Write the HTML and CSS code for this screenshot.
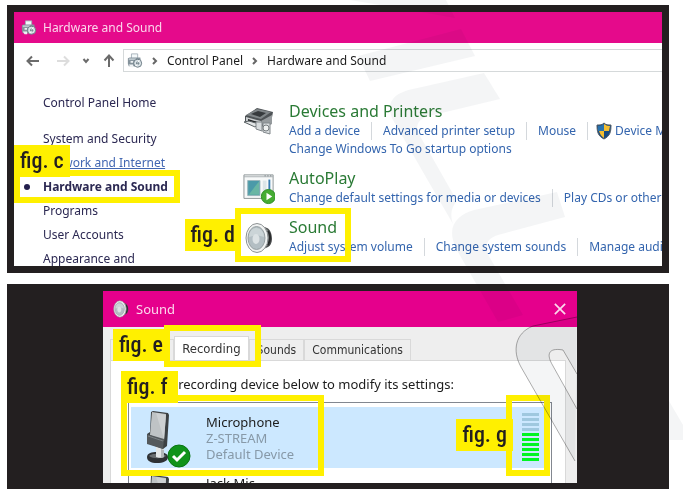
FILE: index.html
```html
<!DOCTYPE html>
<html lang="en">
<head>
<meta charset="utf-8">
<title>Sound settings guide</title>
<link rel="stylesheet" href="styles.css">
</head>
<body>
<svg width="0" height="0" class="defs" aria-hidden="true">
  <symbol id="hardware" viewBox="0 0 18 18">
    <path d="M5 1h7v6H5z" fill="#f4f8fa" stroke="#a2afb8"/>
    <path d="M1 6l2-1h12l1 8-5 2H2l-1-3z" fill="#84929b"/>
    <path d="M2 6h8v2H2z" fill="#bdc8ce"/>
    <path d="M4 9h3v2H4zM2 13h5v3H4z" fill="#eef2f4"/>
    <circle cx="12" cy="11.500" r="4.500" fill="#d9e2e6" stroke="#63737d"/>
    <circle cx="12" cy="11.500" r="1.800" fill="#72838d"/>
    <path d="M12 11l2-3M12 12l-2 3" stroke="#fff"/>
  </symbol>
  <symbol id="speaker" viewBox="0 0 28 32">
    <path d="M12 2l10 4c3 1 5 6 5 11 0 4-2 7-4 8l-11 5z" fill="#4b4d4f"/>
    <path d="M17 4l5 3c4 4 4 13 0 17l-6 4z" fill="#77797a"/>
    <path d="M23 9c3 4 2 10 0 14" fill="none" stroke="#292b2c" stroke-width="2"/>
    <ellipse cx="12" cy="16" rx="11" ry="14.500" fill="#f1f3f3" stroke="#8d9294"/>
    <ellipse cx="11.500" cy="16" rx="8.500" ry="11.500" fill="#b3bec3" stroke="#969fa2"/>
    <path d="M4 15c0-5 3-9 7-9 5 0 8 4 8 9l-7-2z" fill="#cbd4d7"/>
    <ellipse cx="11" cy="17" rx="3.500" ry="5" fill="#dce2e4"/>
  </symbol>
  <symbol id="microphone" viewBox="0 0 24 52">
    <path d="M0 46c0-4 5-5 10-5s11 1 11 5-5 6-11 6-10-2-10-6z" fill="#2f3235"/>
    <path d="M2 45c2-3 15-3 17 0-4 3-13 3-17 0z" fill="#6a6e71"/>
    <path d="M9 33l8 1v12c-2 1-6 1-8 0z" fill="#e3e6e7"/>
    <path d="M14 38l3 1v7l-3 1z" fill="#b2b7b9"/>
    <path d="M4 1l2-1 15 2 1 2-2 31-4 3-16-6V23l3-2z" fill="#3c4043"/>
    <path d="M5 1l14 2-2 27-14-6z" fill="#bfc3c5"/>
    <path d="M9 2l10 2-2 24z" fill="#cdd0d2"/>
    <path d="M0 23l17 5-1 10-16-5z" fill="#54595c"/>
    <path d="M1 25l15 5" stroke="#7b8184"/>
  </symbol>
</svg>

<main class="page">
  <section class="frame">
    <div class="window">
      <header class="titlebar"><svg class="icon-sm"><use href="#hardware"/></svg><h1>Hardware and Sound</h1></header>
      <div class="toolbar">
        <button class="nav" aria-label="Back"><svg viewBox="0 0 14 14"><path d="M13 7H2M6 2.500L1.500 7 6 11.500"/></svg></button>
        <button class="nav forward" aria-label="Forward" disabled><svg viewBox="0 0 14 14"><path d="M1 7h11M8 2.500L12.500 7 8 11.500"/></svg></button>
        <button class="nav recent" aria-label="Recent locations"><svg viewBox="0 0 8 14"><path d="M1.500 5L4 8l2.500-3"/></svg></button>
        <button class="nav" aria-label="Up"><svg viewBox="0 0 14 14"><path d="M7 13V2M2.500 6.500L7 1.500l4.500 5"/></svg></button>
        <nav class="address" aria-label="Address">
          <svg class="icon-sm"><use href="#hardware"/></svg>
          <svg class="chevron" viewBox="0 0 6 10"><path d="M1 2l3 3-3 3"/></svg>
          <a href="#">Control Panel</a>
          <svg class="chevron" viewBox="0 0 6 10"><path d="M1 2l3 3-3 3"/></svg>
          <a href="#">Hardware and Sound</a>
        </nav>
      </div>
      <div class="content">
        <nav class="sidebar" aria-label="Categories">
          <a class="home" href="#">Control Panel Home</a>
          <a href="#">System and Security</a>
          <a class="hover" href="#">Network and Internet</a>
          <a class="current" href="#">Hardware and Sound<span class="mark mark-c"></span><span class="tag tag-c">fig. c</span></a>
          <a href="#">Programs</a>
          <a href="#">User Accounts</a>
          <a class="cut" href="#">Appearance and</a>
        </nav>
        <div class="categories">
          <section class="category">
            <svg class="icon" viewBox="0 0 32 32">
              <path d="M2 10L14 2l16 4-2 11-12 5L2 16z" fill="#4e5356"/>
              <path d="M3 9L14 3l14 3-10 7z" fill="#808689"/><path d="M8 8l7-3 8 2-6 4z" fill="#363a3d"/>
              <path d="M3 11l15 4v5L3 16z" fill="#c9cdcf"/><path d="M5 13l10 3v3L5 16z" fill="#222527"/>
              <path d="M1 16l5-1 10 3-4 3z" fill="#e2e5e6" stroke="#5c6366"/><path d="M18 15l11-6v9l-8 4z" fill="#969b9e"/>
              <path d="M13 16h6v9l-6-2zM20 17h7v11l-7-2z" fill="#d8dcde" stroke="#80868a"/><circle cx="23" cy="22" r="3" fill="#eef0f0" stroke="#777d80"/>
            </svg>
            <div class="info"><h2>Devices and Printers</h2>
              <p class="links"><a href="#">Add a device</a><a href="#">Advanced printer setup</a><a href="#">Mouse</a><a class="admin" href="#"><svg class="shield" viewBox="0 0 16 18"><path d="M8 1c2 2 4 2 7 2 0 7-1 11-7 14C2 14 1 10 1 3c3 0 5 0 7-2z" fill="#174b83"/><path d="M8 2v7H2V4c3 0 4-1 6-2z" fill="#2872ae"/><path d="M8 2c2 1 3 2 6 2l-1 5H8zM3 9h5v7c-3-2-4-4-5-7z" fill="#f4bd2f"/><path d="M8 1c2 2 4 2 7 2 0 7-1 11-7 14C2 14 1 10 1 3c3 0 5 0 7-2z" fill="none" stroke="#525c65"/></svg>Device Manager</a></p>
              <p class="links"><a href="#">Change Windows To Go startup options</a></p></div>
          </section>
          <section class="category">
            <svg class="icon" viewBox="0 0 34 32">
              <path d="M1 1h31v25H1z" fill="#f7f9f9" stroke="#8b9395"/><path d="M1 3h31" stroke="#a6aeb1"/><path d="M23 2h1M26 2h1M29 2h1" stroke="#566267"/>
              <path d="M5 7h13v16H5z" fill="#4b9aa9" stroke="#9bb5bb"/><path d="M6 22L17 8v14z" fill="#69b6a4"/><path d="M21 7h4v13h-4z" fill="#dce5e8"/><path d="M28 6v11" stroke="#397cb2" stroke-width="2"/>
              <circle cx="27" cy="24" r="7.500" fill="#46ac33" stroke="#2c8b25"/><path d="M25 20l6 4-6 4z" fill="#fff"/>
            </svg>
            <div class="info"><h2>AutoPlay</h2>
              <p class="links"><a href="#">Change default settings for media or devices</a><a href="#">Play CDs or other media automatically</a></p></div>
          </section>
          <section class="category">
            <svg class="icon"><use href="#speaker"/></svg>
            <div class="info"><h2>Sound</h2>
              <p class="links"><a href="#">Adjust system volume</a><a href="#">Change system sounds</a><a href="#">Manage audio devices</a></p></div>
            <span class="tag tag-d">fig. d</span><span class="mark mark-d"></span>
          </section>
        </div>
      </div>
    </div>
  </section>

  <section class="frame dialog-frame">
    <div class="window dialog">
      <header class="titlebar"><svg class="icon-sm"><use href="#speaker"/></svg><h1>Sound</h1><button class="close" aria-label="Close"><svg viewBox="0 0 14 14"><path d="M1 1l12 12M13 1L1 13"/></svg></button></header>
      <div class="dialog-body">
        <div class="tabs" role="tablist">
          <button role="tab">Playback</button><button role="tab" class="active" aria-selected="true">Recording<span class="mark mark-e"></span></button><button role="tab">Sounds</button><button role="tab">Communications</button>
          <span class="tag tag-e">fig. e</span>
        </div>
        <div class="tab-page">
          <p class="hint">Select a recording device below to modify its settings:</p>
          <div class="devices">
            <div class="device selected">
              <div class="mic"><svg viewBox="0 0 24 52"><use href="#microphone"/></svg><svg class="check" viewBox="0 0 24 24"><circle cx="12" cy="12" r="11" fill="#10931a" stroke="#087411"/><path d="M6 12l4 4 8-8" fill="none" stroke="#fff" stroke-width="3"/></svg></div>
              <div class="names"><strong>Microphone</strong><span>Z-STREAM</span><span>Default Device</span></div>
              <div class="meter" role="meter" aria-label="Input level" aria-valuenow="6" aria-valuemin="0" aria-valuemax="10"><i></i><i></i><i></i><i></i><i class="on"></i><i class="on"></i><i class="on"></i><i class="on"></i><i class="on"></i><i class="on"></i></div>
              <span class="mark mark-f"></span><span class="tag tag-f">fig. f</span>
              <span class="mark mark-g"></span><span class="tag tag-g">fig. g</span>
            </div>
            <div class="device next">
              <div class="mic"><svg viewBox="0 0 24 52"><use href="#microphone"/></svg></div>
              <div class="names"><strong>Jack Mic</strong></div>
            </div>
          </div>
        </div>
      </div>
    </div>
  </section>
  <svg class="watermark" viewBox="0 0 683 499" aria-hidden="true">
    <path d="M350 0h96l9 18-69-12z"/>
    <path d="M461 29l14 27-105 25-12-25z"/>
    <path d="M484 73l16 26-71 17c-13 4-14 11-9 20l37 65c-6 6-7 15-4 23l-60-104c-8-17 0-27 20-31z"/>
    <path d="M557 192l8 25-67 18c-13 4-14 13-8 23l33 57-25 7-40-70c-14-25-1-37 16-42z"/>
    <path class="line" d="M577 317l-44 9c-18 7-21 25-12 41l54 94M577 409l-24-43c-9-15-1-18 10-16l14 24"/>
    <path d="M669 401l14 24v15h-14z"/>
  </svg>
</main>
</body>
</html>
```
FILE: styles.css
```css
* { box-sizing: border-box; }
body { margin: 0; background: #fff; font: 12px/18px "Noto Sans", "Open Sans", sans-serif; color: #1c1c1c; overflow: hidden; }
h1, h2, p { margin: 0; font-weight: 400; }
a { color: inherit; text-decoration: none; white-space: nowrap; }
button { margin: 0; padding: 0; border: 0; background: none; font: inherit; color: inherit; }
svg { display: block; flex: none; }
.defs { position: absolute; }
.page { position: relative; display: flex; flex-direction: column; gap: 11px; padding: 5px 14px 10px 7px; }
.frame { background: #231f20; padding: 7px; }
.window { background: #fff; overflow: hidden; }
.titlebar { display: flex; align-items: center; gap: 6px; height: 31px; padding: 0 7px; background: #e50a8b; color: #fbd7ec; }
.titlebar h1 { font-size: 12px; line-height: 18px; }
.icon-sm { width: 16px; height: 18px; }

.toolbar { display: flex; align-items: center; gap: 12px; padding: 6px 0 0 12px; }
.nav svg { width: 14px; height: 14px; fill: none; stroke: #6b6b6b; stroke-width: 2; }
.nav.forward { margin-left: 4px; }
.nav.forward svg { stroke: #ddd; }
.nav.recent svg { width: 8px; }
.address { display: flex; flex: 1; align-items: center; gap: 9px; height: 23px; padding-left: 3px; border: 1px solid #d5d9da; border-right: 0; margin-left: -5px; }
.chevron { width: 6px; height: 10px; fill: none; stroke: #666; stroke-width: 2; }

.content { display: flex; padding-top: 19px; }
.sidebar { display: flex; flex-direction: column; flex: none; width: 229px; padding-left: 29px; color: #2b2852; line-height: 24px; }
.sidebar .home { margin-bottom: 12px; }
.sidebar .hover { color: #4267b2; text-decoration: underline; }
.sidebar .current { position: relative; align-self: flex-start; font-weight: 700; }
.sidebar .current::before { content: ""; position: absolute; left: -19px; top: 9px; width: 6px; height: 6px; border-radius: 50%; background: #241f4d; }
.sidebar .cut { height: 19px; overflow: hidden; }
.categories { display: flex; flex: 1; flex-direction: column; gap: 10px; min-width: 0; padding-top: 10px; }
.category { position: relative; display: flex; gap: 14px; }
.icon { width: 32px; height: 32px; margin-top: 5px; }
.info { min-width: 0; }
.info h2 { color: #2a7a35; font-size: 16px; line-height: 21px; white-space: nowrap; }
.links { display: flex; color: #3465ae; }
.links a { display: flex; align-items: center; }
.links a + a { margin-left: 11px; padding-left: 11px; border-left: 1px solid #d4d8dc; }
.shield { width: 16px; height: 18px; margin: 0 3px 0 -3px; }

.mark { position: absolute; border: 6px solid #fff000; z-index: 2; }
.tag { position: absolute; z-index: 3; height: 32px; padding: 0 6px; background: #fff000; color: #231f20; font: 500 22px/31px "Roboto Condensed", "Liberation Sans Narrow", sans-serif; white-space: nowrap; }
.mark-c { left: -29px; right: -12px; top: -5px; height: 33px; }
.tag-c { left: -29px; top: -30px; }
.mark-d { left: -8px; top: -9px; width: 116px; height: 54px; }
.tag-d { right: 100%; margin-right: 2px; top: 2px; }

.dialog-frame { padding: 7px 92px 6px 96px; }
.dialog .titlebar { height: 36px; padding: 0 11px 0 10px; background: #e5008c; gap: 7px; }
.dialog .titlebar h1 { font-size: 13px; }
.close { margin-left: auto; }
.close svg { width: 12px; height: 12px; fill: none; stroke: #fbd7ec; stroke-width: 2; }
.dialog-body { background: #eee; padding: 9px 11px 0 7px; }
.tabs { position: relative; display: flex; align-items: flex-end; color: #333; }
.tabs button { height: 21px; padding: 0 7px; border: 1px solid #d9d9d9; border-bottom: 0; font: 12px/20px "DejaVu Sans Condensed", "DejaVu Sans", sans-serif; }
.tabs .active { position: relative; height: 24px; background: #fff; font-size: 13px; }
.mark-e { left: -11px; right: -13px; top: -12px; height: 42px; }
.tag-e { left: 3px; top: -7px; }
.tab-page { background: #fff; border: 1px solid #d9d9d9; border-bottom: 0; padding: 14px 13px 0 17px; }
.hint { padding-bottom: 9px; font-size: 13px; white-space: nowrap; }
.devices { border: 1px solid #828790; border-bottom: 0; padding: 4px 2px 0; }
.device { display: flex; gap: 15px; padding-left: 16px; }
.selected { position: relative; height: 61px; padding-top: 4px; background: #cce8ff; }
.mic { position: relative; width: 44px; }
.mic svg { width: 24px; height: 52px; }
.mic .check { position: absolute; right: 0; bottom: 0; width: 24px; height: 24px; }
.names { display: flex; flex-direction: column; font-size: 13px; line-height: 16px; padding-top: 3px; color: #8799a8; }
.names strong { color: #1c1c1c; font-weight: 400; }
.meter { display: flex; flex-direction: column; gap: 2px; width: 17px; margin: 2px 10px 0 auto; }
.meter i { height: 3px; background: #9fc8df; }
.meter .on { background: #00f422; }
.mark-f { left: -10px; top: -12px; width: 203px; height: 81px; }
.tag-f { left: -10px; top: -36px; width: 57px; }
.mark-g { right: -1px; top: -12px; width: 44px; height: 81px; }
.tag-g { right: 36px; top: 12px; }
.next { height: 15px; padding-top: 7px; overflow: hidden; }
.next .names { padding-top: 0; }
.watermark { position: absolute; left: 0; top: 0; z-index: 4; width: 683px; height: 499px; pointer-events: none; fill: #607080; fill-opacity: .07; mix-blend-mode: multiply; }
.watermark .line { stroke: #777; stroke-opacity: .6; }
```
